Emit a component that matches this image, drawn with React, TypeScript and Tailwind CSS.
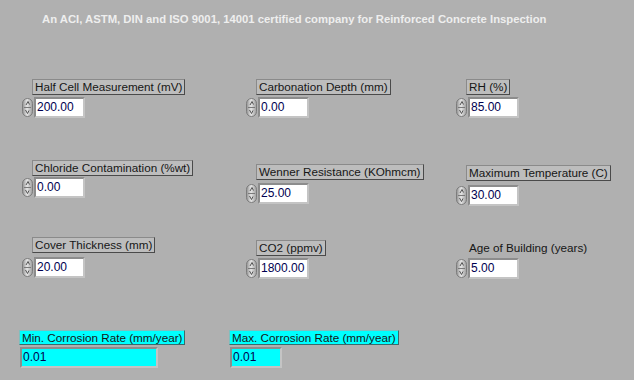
import React from "react";

function Spinner() {
  return (
    <svg width="11" height="19" viewBox="0 0 11 19" className="shrink-0">
      <defs>
        <linearGradient id="sg" x1="0" y1="0" x2="1" y2="0">
          <stop offset="0" stopColor="#8f8f8f" />
          <stop offset="0.45" stopColor="#e6e6e6" />
          <stop offset="1" stopColor="#9c9c9c" />
        </linearGradient>
      </defs>
      <rect x="0.5" y="0.5" width="10" height="18" rx="5" fill="url(#sg)" stroke="#7c7c7c" />
      <line x1="2" y1="9.5" x2="9" y2="9.5" stroke="#7a7a7a" />
      <path d="M4 7 L6 3.5 L7.5 6.5" fill="none" stroke="#555" strokeWidth="1" />
      <path d="M3.5 12 L5.5 15.5 L7 12.5" fill="none" stroke="#555" strokeWidth="1" />
    </svg>
  );
}

type CtrlProps = {
  label: string;
  value: string;
  boxed?: boolean;
  mt?: string;
  gap?: string;
};

function Control({ label, value, boxed = true, mt = "mt-0", gap = "mt-[2px]" }: CtrlProps) {
  return (
    <div className={`flex flex-col items-start ${mt}`}>
      <div
        className={`ml-[10px] h-[16px] px-[2px] text-[11.7px] leading-[14px] text-[#161616] whitespace-nowrap border ${
          boxed
            ? "bg-[#BDBDBD] border-t-[#8a8a8a] border-l-[#8a8a8a] border-b-[#4a4a4a] border-r-[#4a4a4a]"
            : "border-transparent"
        }`}
      >
        {label}
      </div>
      <div className={`flex items-center ${gap}`}>
        <Spinner />
        <div className="ml-[1px] w-[51px] h-[21px] border-2 border-t-[#8c8c8c] border-l-[#8c8c8c] border-b-[#c4c4c4] border-r-[#c4c4c4]">
          <div className="w-full h-full bg-white text-[12px] leading-[17px] pl-[1px] text-[#000050]">
            {value}
          </div>
        </div>
      </div>
    </div>
  );
}

function Indicator({ label, value, w }: { label: string; value: string; w: string }) {
  return (
    <div className="flex flex-col items-start">
      <div className="h-[15px] px-[2px] text-[11.7px] leading-[13px] text-[#161616] whitespace-nowrap bg-[#00FFFF] border border-t-[#7fbfbf] border-l-[#7fbfbf] border-b-[#3a6a6a] border-r-[#3a6a6a]">
        {label}
      </div>
      <div className={`mt-[2px] ml-[1px] ${w} h-[21px] border-2 border-t-[#8c8c8c] border-l-[#8c8c8c] border-b-[#c4c4c4] border-r-[#c4c4c4]`}>
        <div className="w-full h-full bg-[#00FFFF] text-[12px] leading-[17px] pl-[1px] text-[#000050]">{value}</div>
      </div>
    </div>
  );
}

export default function App() {
  return (
    <div className="w-[634px] h-[380px] bg-[#B0B0B0] overflow-hidden font-['Liberation_Sans',Arial,sans-serif]">
      <div className="pt-[13px] pl-[42px] h-[26px] text-[11.3px] leading-[13px] font-bold text-[#EEEEEE] whitespace-nowrap">
        An ACI, ASTM, DIN and ISO 9001, 14001 certified company for Reinforced Concrete Inspection
      </div>

      <div className="flex items-start pl-[22px] mt-[53px] h-[81px]">
        <div className="w-[224px]">
          <Control label="Half Cell Measurement (mV)" value="200.00" />
        </div>
        <div className="w-[210px]">
          <Control label="Carbonation Depth (mm)" value="0.00" />
        </div>
        <div>
          <Control label="RH (%)" value="85.00" />
        </div>
      </div>

      <div className="flex items-start pl-[22px] h-[77px]">
        <div className="w-[224px]">
          <Control label="Chloride Contamination (%wt)" value="0.00" gap="mt-[1px]" />
        </div>
        <div className="w-[210px]">
          <Control label="Wenner Resistance (KOhmcm)" value="25.00" mt="mt-[4px]" gap="mt-[3px]" />
        </div>
        <div>
          <Control label="Maximum Temperature (C)" value="30.00" mt="mt-[5px]" gap="mt-[4px]" />
        </div>
      </div>

      <div className="flex items-start pl-[22px] h-[93px]">
        <div className="w-[224px]">
          <Control label="Cover Thickness (mm)" value="20.00" gap="mt-[4px]" />
        </div>
        <div className="w-[210px]">
          <Control label="CO2 (ppmv)" value="1800.00" mt="mt-[3px]" gap="mt-[2px]" />
        </div>
        <div>
          <Control label="Age of Building (years)" value="5.00" boxed={false} mt="mt-[3px]" gap="mt-[2px]" />
        </div>
      </div>

      <div className="flex items-start pl-[19px]">
        <div className="w-[210px]">
          <Indicator label="Min. Corrosion Rate (mm/year)" value="0.01" w="w-[138px]" />
        </div>
        <div>
          <Indicator label="Max. Corrosion Rate (mm/year)" value="0.01" w="w-[52px]" />
        </div>
      </div>
    </div>
  );
}
